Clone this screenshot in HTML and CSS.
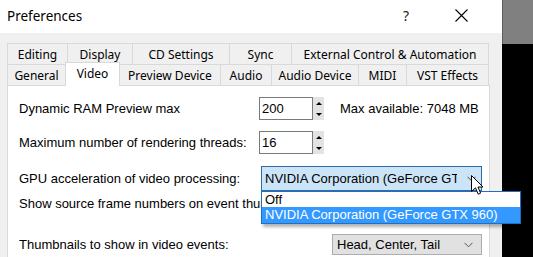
FILE: index.html
```html
<!DOCTYPE html>
<html>
<head>
<meta charset="utf-8">
<link rel="stylesheet" href="styles.css">
</head>
<body>
<div class="dialog">
  <div class="titlebar">
    <span class="title">Preferences</span>
    <span class="help">?</span>
    <svg class="close" width="13" height="13" viewBox="0 0 13 13"><path d="M0.5 0.5 L12.5 12.5 M12.5 0.5 L0.5 12.5" stroke="#000" stroke-width="1.1" fill="none"/></svg>
  </div>
  <div class="client">
    <div class="tabrow">
      <div class="tab first" style="width:61px">Editing</div>
      <div class="tab" style="width:65px">Display</div>
      <div class="tab" style="width:97px">CD Settings</div>
      <div class="tab" style="width:62px">Sync</div>
      <div class="tab" style="width:197px">External Control &amp; Automation</div>
    </div>
    <div class="tabrow">
      <div class="tab first" style="width:59px">General</div>
      <div class="tab selected" style="width:54px">Video</div>
      <div class="tab" style="width:101px">Preview Device</div>
      <div class="tab" style="width:51px">Audio</div>
      <div class="tab" style="width:87px">Audio Device</div>
      <div class="tab" style="width:48px">MIDI</div>
      <div class="tab" style="width:82px">VST Effects</div>
    </div>
    <div class="panel">
      <div class="row r1">
        <span class="label">Dynamic RAM Preview max</span>
        <div class="spin">
          <div class="spin-box">200</div>
          <div class="spin-btns"><span class="up"></span><span class="down"></span></div>
        </div>
        <span class="avail">Max available: 7048 MB</span>
      </div>
      <div class="row r2">
        <span class="label">Maximum number of rendering threads:</span>
        <div class="spin">
          <div class="spin-box">16</div>
          <div class="spin-btns"><span class="up"></span><span class="down"></span></div>
        </div>
      </div>
      <div class="row r3">
        <span class="label">GPU acceleration of video processing:</span>
        <div class="combo-wrap">
          <div class="combo gpu">
            <span class="combo-text">NVIDIA Corporation (GeForce GTX 960)</span>
            <svg class="chev" width="9" height="6" viewBox="0 0 9 6"><path d="M0.5 0.8 L4.5 4.8 L8.5 0.8" stroke="#444" stroke-width="1" fill="none"/></svg>
          </div>
          <div class="dropdown">
            <div class="item">Off</div>
            <div class="item sel">NVIDIA Corporation (GeForce GTX 960)</div>
          </div>
        </div>
      </div>
      <div class="row r4">
        <span class="label clipped">Show source frame numbers on event thumbnails as:</span>
      </div>
      <div class="row r5">
        <span class="label">Thumbnails to show in video events:</span>
        <div class="combo plain">
          <span class="combo-text">Head, Center, Tail</span>
          <svg class="chev" width="9" height="6" viewBox="0 0 9 6"><path d="M0.5 0.8 L4.5 4.8 L8.5 0.8" stroke="#555" stroke-width="1" fill="none"/></svg>
        </div>
      </div>
    </div>
  </div>
</div>
<div class="desktop">
  <div class="desk-top"></div>
  <div class="desk-bottom"></div>
</div>
<svg class="cursor" width="14" height="22" viewBox="0 0 14 22"><path d="M0.5 0.5 L0.5 16.5 L4.5 12.8 L7.2 19.2 L9.6 18.2 L7 12 L12 12 Z" fill="#fff" stroke="#000" stroke-width="1" stroke-linejoin="miter"/></svg>
</body>
</html>
```
FILE: styles.css
```css
html, body {
  margin: 0;
  padding: 0;
}
body {
  width: 533px;
  height: 257px;
  overflow: hidden;
  display: flex;
  position: relative;
  font-family: "Liberation Sans", Arial, sans-serif;
  font-size: 13px;
  color: #000;
}
.dialog {
  width: 502px;
  display: flex;
  flex-direction: column;
  background: #f0f0f0;
}
.titlebar {
  height: 33px;
  background: #fff;
  display: flex;
  align-items: center;
  padding-left: 7px;
  padding-right: 34px;
  box-sizing: border-box;
  font-family: "Noto Sans", sans-serif;
}
.title {
  flex: 1;
  font-size: 13.5px;
  margin-top: -2px;
}
.help {
  font-size: 14px;
  margin-right: 46px;
  margin-top: -3px;
  color: #222;
}
.close {
  margin-top: -3px;
}
.client {
  flex: 1;
  display: flex;
  flex-direction: column;
  padding: 10px 12px 0 7px;
}
.tabrow {
  display: flex;
  height: 21px;
}
.tab {
  box-sizing: border-box;
  height: 21px;
  border-top: 1px solid #d9d9d9;
  border-right: 1px solid #d9d9d9;
  display: flex;
  align-items: center;
  justify-content: center;
  font-family: "Noto Sans", sans-serif;
  font-size: 12px;
  color: #000;
  background: #f0f0f0;
  white-space: nowrap;
}
.tab.first {
  border-left: 1px solid #d9d9d9;
}
.tab.selected {
  position: relative;
  z-index: 2;
  height: 24px;
  margin-top: -2px;
  background: #fff;
  border: 1px solid #d9d9d9;
  border-bottom: none;
  align-items: flex-start;
  padding-top: 2px;
  margin-left: -1px;
  width: 55px !important;
}
.panel {
  flex: 1;
  background: #fff;
  border: 1px solid #d9d9d9;
  border-bottom: none;
  padding: 11px 0 0 11px;
  display: flex;
  flex-direction: column;
}
.row {
  display: flex;
  align-items: center;
}
.label {
  width: 240px;
  flex: none;
  white-space: nowrap;
}
.label.clipped {
  width: 242px;
  overflow: hidden;
}
.r1 { height: 23px; }
.r2 { height: 23px; margin-top: 11px; }
.r3 { height: 25px; margin-top: 12px; }
.r4 { height: 24px; }
.r5 { height: 21px; margin-top: 19px; }
.spin {
  display: flex;
}
.spin-box {
  width: 54px;
  height: 23px;
  box-sizing: border-box;
  border: 1px solid #7a7a7a;
  background: #fff;
  padding-left: 2px;
  line-height: 21px;
}
.spin-btns {
  width: 11px;
  height: 23px;
  background: #e3e3e3;
  display: flex;
  flex-direction: column;
  align-items: center;
  justify-content: space-between;
  padding: 5px 0 4px;
  box-sizing: border-box;
}
.up {
  width: 0;
  height: 0;
  border-left: 3px solid transparent;
  border-right: 3px solid transparent;
  border-bottom: 3px solid #000;
}
.down {
  width: 0;
  height: 0;
  border-left: 3px solid transparent;
  border-right: 3px solid transparent;
  border-top: 3px solid #000;
}
.avail {
  margin-left: 16px;
}
.combo-wrap {
  position: relative;
  margin-left: 2px;
  z-index: 5;
}
.combo {
  box-sizing: border-box;
  display: flex;
  align-items: center;
  overflow: hidden;
  white-space: nowrap;
}
.combo-text {
  flex: 1;
  overflow: hidden;
}
.combo.gpu {
  width: 221px;
  height: 25px;
  background: #cce4f7;
  border: 1px solid #2e6ca4;
  padding: 0 5px 0 3px;
}
.combo.gpu .combo-text {
  margin-right: 10px;
}
.combo.plain {
  margin-left: 73px;
  width: 150px;
  height: 21px;
  background: #e1e1e1;
  border: 1px solid #adadad;
  padding: 0 8px 0 4px;
}
.dropdown {
  position: absolute;
  left: 0;
  top: 25px;
  width: 260px;
  box-sizing: border-box;
  background: #fff;
  border: 1px solid #1f6fc2;
  box-shadow: 2px 3px 3px rgba(0, 0, 0, 0.3);
}
.item {
  height: 15px;
  line-height: 15px;
  padding-left: 3px;
  white-space: nowrap;
}
.item.sel {
  height: 16px;
  line-height: 16px;
  background: #3399ff;
  color: #fff;
}
.desktop {
  width: 31px;
  display: flex;
  flex-direction: column;
}
.desk-top {
  height: 44px;
  background: #808080;
  border-left: 1px solid #5e5e5e;
}
.desk-bottom {
  flex: 1;
  background: #000;
}
.cursor {
  position: absolute;
  left: 471px;
  top: 175px;
  z-index: 10;
}
```
